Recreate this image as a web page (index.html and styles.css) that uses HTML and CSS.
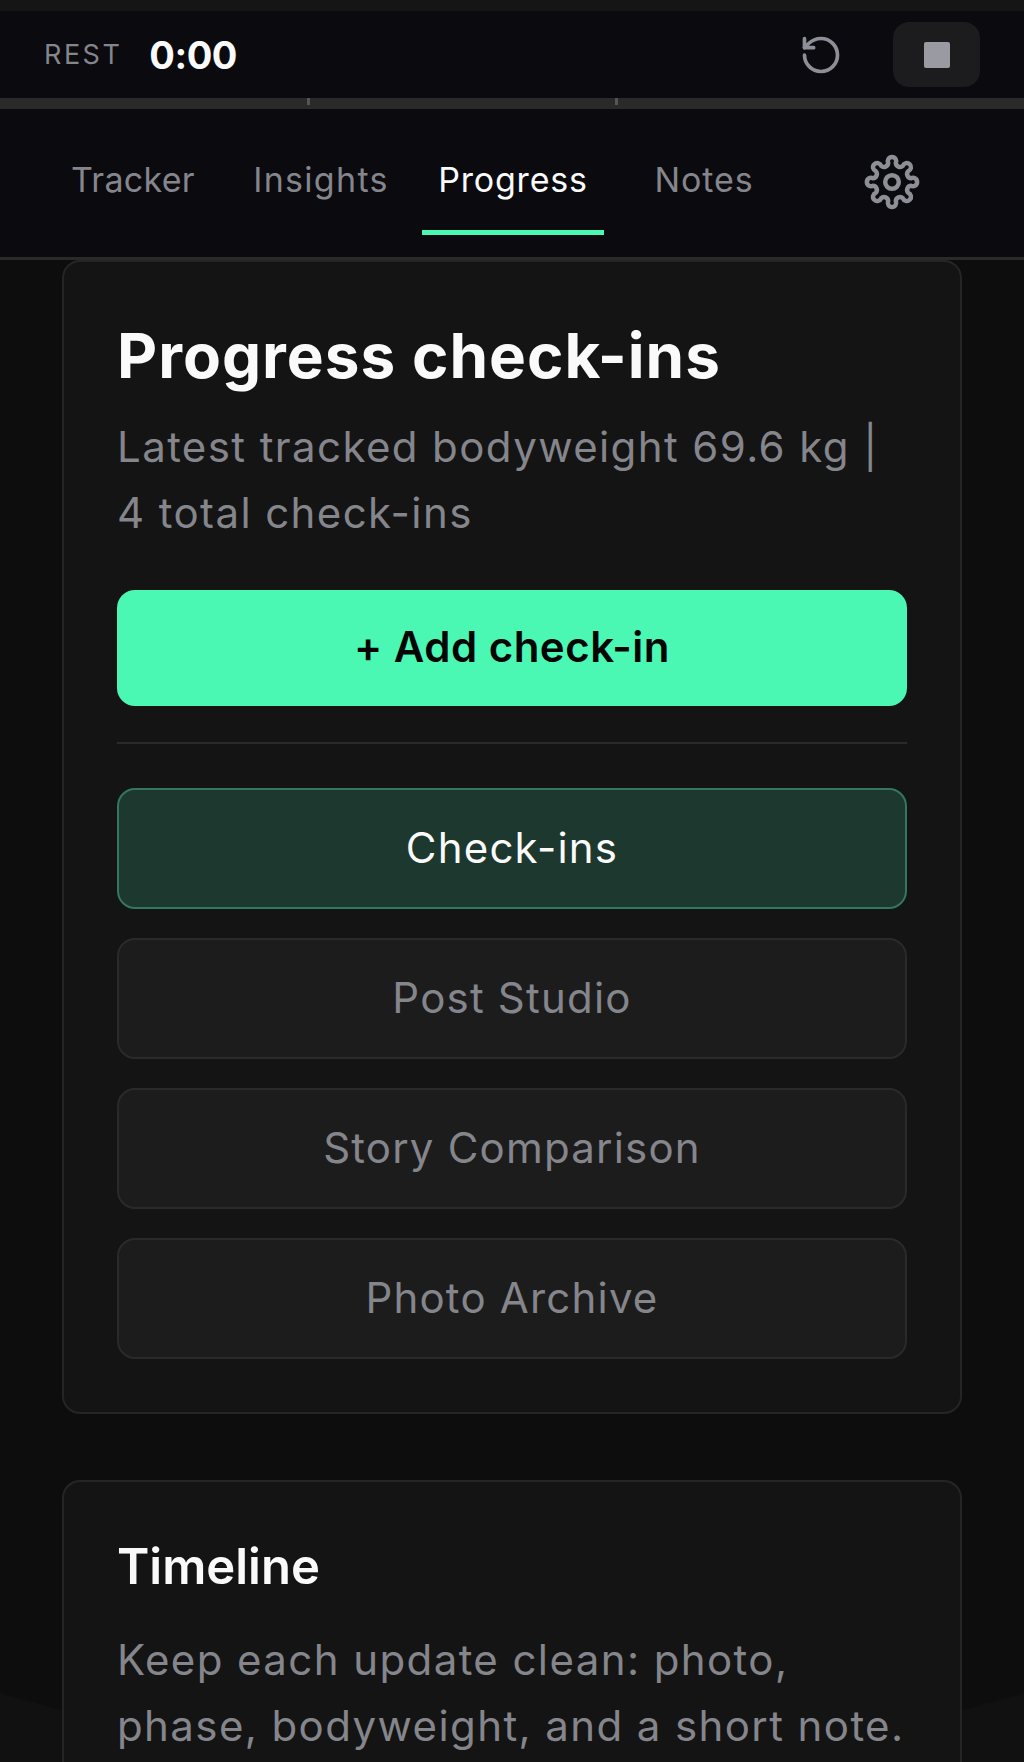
FILE: index.html
```html
<!DOCTYPE html>
<html lang="en">
<head>
    <meta charset="UTF-8">
    <title>Progress</title>
    <link rel="stylesheet" href="styles.css">
</head>
<body>
    <div class="top-strip"></div>
    <div class="timer-bar">
        <span class="rest-label">REST</span>
        <span class="rest-time">0:00</span>
        <button class="reset-button">
            <svg width="44" height="44" viewBox="0 0 24 24" fill="none" stroke="#8e8e96" stroke-width="2" stroke-linecap="round" stroke-linejoin="round">
                <path d="M3 12a9 9 0 1 0 9-9 9.75 9.75 0 0 0-6.74 2.74L3 8"/>
                <path d="M3 3v5h5"/>
            </svg>
        </button>
        <button class="stop-button"><span class="stop-icon"></span></button>
    </div>
    <div class="progress-strip">
        <span class="tick tick-one"></span>
        <span class="tick tick-two"></span>
    </div>
    <nav class="tabs">
        <a class="tab tab-tracker">Tracker</a>
        <a class="tab tab-insights">Insights</a>
        <a class="tab tab-progress active">Progress</a>
        <a class="tab tab-notes">Notes</a>
        <button class="settings-button">
            <svg width="60" height="60" viewBox="-30 -30 60 60" fill="none" stroke="#8e8e96" stroke-width="4.5" stroke-linejoin="round">
                <path d="M-3.8-19.13A4.2 4.2 0 1 1 3.8-19.13A4.2 4.2 0 0 0 10.83-16.21A4.2 4.2 0 1 1 16.21-10.83A4.2 4.2 0 0 0 19.13-3.8A4.2 4.2 0 1 1 19.13 3.8A4.2 4.2 0 0 0 16.21 10.83A4.2 4.2 0 1 1 10.83 16.21A4.2 4.2 0 0 0 3.8 19.13A4.2 4.2 0 1 1-3.8 19.13A4.2 4.2 0 0 0-10.83 16.21A4.2 4.2 0 1 1-16.21 10.83A4.2 4.2 0 0 0-19.13 3.8A4.2 4.2 0 1 1-19.13-3.8A4.2 4.2 0 0 0-16.21-10.83A4.2 4.2 0 1 1-10.83-16.21A4.2 4.2 0 0 0-3.8-19.13Z"/>
                <circle r="6.8"/>
            </svg>
        </button>
    </nav>
    <main class="content">
        <section class="card">
            <h1 class="card-title">Progress check-ins</h1>
            <p class="card-text">Latest tracked bodyweight 69.6 kg |<br>4 total check-ins</p>
            <button class="add-button">+ Add check-in</button>
            <div class="divider"></div>
            <div class="section-list">
                <button class="section-button selected">Check-ins</button>
                <button class="section-button">Post Studio</button>
                <button class="section-button">Story Comparison</button>
                <button class="section-button">Photo Archive</button>
            </div>
        </section>
        <section class="card card-timeline">
            <h2 class="timeline-title">Timeline</h2>
            <p class="card-text">Keep each update clean: photo,<br>phase, bodyweight, and a short note.</p>
        </section>
    </main>
</body>
</html>
```

FILE: styles.css
```css
html, body {
    height: 1762px;
    overflow: hidden;
}
body {
    margin: 0;
    background: radial-gradient(ellipse 1500px 1260px at 50% 510px, #0d0d0d 99.8%, #111 100%);
    font-family: 'Inter', 'Liberation Sans', sans-serif;
    color: #8e8e96;
}
button {
    border: none;
    background: none;
    padding: 0;
    font-family: inherit;
}
.top-strip {
    height: 11px;
    background-color: #151515;
}
.timer-bar {
    height: 87px;
    display: flex;
    align-items: center;
    padding: 0 44px;
    background-color: #0a0a0f;
}
.rest-label {
    font-size: 27px;
    letter-spacing: 2.5px;
    color: #85858c;
}
.rest-time {
    margin-left: 27px;
    font-size: 38px;
    font-weight: 700;
    letter-spacing: -0.5px;
    color: #fafafa;
}
.reset-button {
    margin-left: auto;
    display: flex;
}
.stop-button {
    margin-left: 50px;
    width: 87px;
    height: 65px;
    display: flex;
    align-items: center;
    justify-content: center;
    border-radius: 16px;
    background-color: #1c1c1f;
}
.stop-icon {
    width: 26px;
    height: 26px;
    border-radius: 2px;
    background-color: #9a9aa2;
}
.progress-strip {
    position: relative;
    height: 11px;
    background-color: #2a2a2a;
}
.tick {
    position: absolute;
    top: 0;
    width: 3px;
    height: 7px;
    background-color: #555;
}
.tick-one { left: 307px; }
.tick-two { left: 615px; }
.tabs {
    height: 148px;
    display: flex;
    background-color: #0a0a0f;
    border-bottom: 3px solid #2a2a2a;
}
.tab {
    box-sizing: border-box;
    height: 126px;
    padding-top: 19px;
    display: flex;
    align-items: center;
    justify-content: center;
    font-size: 34px;
    color: #85858c;
    border-bottom: 5px solid transparent;
}
.tab-tracker { width: 140px; margin-left: 63px; letter-spacing: 0.3px; }
.tab-insights { width: 150px; margin-left: 43px; letter-spacing: 1.3px; }
.tab-progress { width: 182px; margin-left: 26px; letter-spacing: 0.8px; }
.tab-notes { width: 120px; margin-left: 40px; letter-spacing: 0.9px; }
.tab.active {
    color: #fafafa;
    border-bottom-color: #4af8b4;
}
.settings-button {
    margin-left: 98px;
    height: 146px;
    display: flex;
    align-items: center;
}
.content {
    display: flex;
    flex-direction: column;
    gap: 66px;
    padding: 0 62px;
}
.card {
    padding: 57px 53px 53px;
    background-color: #141414;
    border: 2px solid #252525;
    border-radius: 18px;
}
.card-title {
    margin: 0;
    font-size: 62px;
    line-height: 74px;
    font-weight: 700;
    letter-spacing: 1px;
    color: #fafafa;
}
.card-text {
    margin: 21px 0 0;
    font-size: 42px;
    line-height: 66px;
    letter-spacing: 1.4px;
    color: #85858c;
}
.add-button {
    display: block;
    width: 100%;
    height: 116px;
    margin-top: 44px;
    padding-bottom: 3px;
    border-radius: 18px;
    background-color: #4af8b4;
    font-size: 42px;
    font-weight: 600;
    letter-spacing: 0.5px;
    color: #050505;
}
.divider {
    height: 2px;
    margin: 36px 0 44px;
    background-color: #2a2a2a;
}
.section-list {
    display: flex;
    flex-direction: column;
    gap: 29px;
}
.section-button {
    height: 121px;
    padding-bottom: 2px;
    border: 2px solid #2a2a2a;
    border-radius: 18px;
    background-color: #1c1c1c;
    font-size: 42px;
    letter-spacing: 1.2px;
    color: #85858c;
}
.section-button.selected {
    border-color: #33775c;
    background-color: #1d382e;
    color: #fafafa;
}
.card-timeline {
    padding-top: 55px;
}
.timeline-title {
    margin: 0;
    font-size: 49px;
    line-height: 60px;
    font-weight: 600;
    color: #fafafa;
}
.card-timeline .card-text {
    margin-top: 30px;
}
```
